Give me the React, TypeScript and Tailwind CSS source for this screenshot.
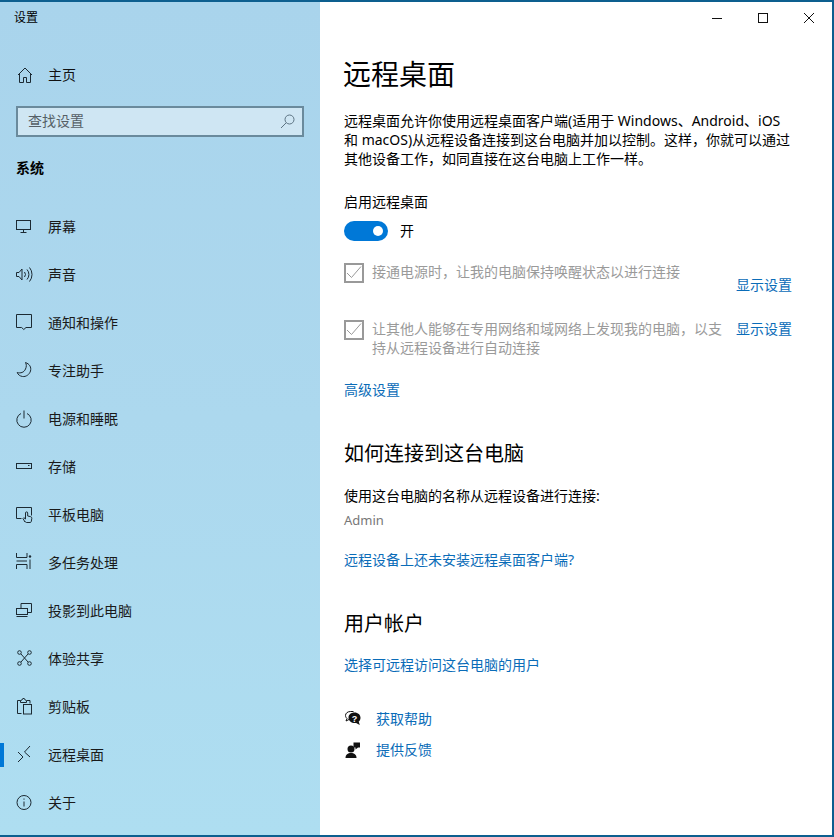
const font = "font-['Noto_Sans','Noto_Sans_CJK_SC',sans-serif]";

function Icon({ children }: { children: React.ReactNode }) {
  return (
    <svg width="20" height="20" viewBox="0 0 20 20" fill="none" stroke="#1c2a33" strokeWidth="1" className="shrink-0">
      {children}
    </svg>
  );
}

const navItems = [
  {
    label: "屏幕",
    icon: (
      <>
        <rect x="0.500" y="3.500" width="14" height="9" />
        <path d="M7.500 13v2M4.500 15.500h6" />
      </>
    ),
  },
  {
    label: "声音",
    icon: (
      <>
        <path d="M0.500 7.500h2.500l3-3.500v11l-3-3.500h-2.500z" />
        <path d="M8.500 7a4 4 0 0 1 0 5M11 4.500a7.500 7.500 0 0 1 0 10M13.500 2.500a11 11 0 0 1 0 14" />
      </>
    ),
  },
  {
    label: "通知和操作",
    icon: <path d="M0.500 1.500h15v13h-5.500l-2.200 2-2.200-2h-5.100z" />,
  },
  {
    label: "专注助手",
    icon: <path d="M9.500 1.500c4 1.500 6 4.500 5 8.500-1 3.500-4.500 6-8 5.500-2.500-.4-4.500-1.800-5.300-4 3.500 1 6.800 0 8.300-3.500 1.100-2.300 1.100-4.500 0-6.500z" />,
  },
  {
    label: "电源和睡眠",
    icon: (
      <>
        <path d="M5 4.500a7.200 7.200 0 1 0 6 0" />
        <path d="M8 1.500v8" />
      </>
    ),
  },
  {
    label: "存储",
    icon: (
      <>
        <rect x="0.500" y="6.500" width="15" height="5" />
        <path d="M12 8.500h1.500" />
      </>
    ),
  },
  {
    label: "平板电脑",
    icon: (
      <>
        <path d="M5.500 13.500h-5v-11h15v8" />
        <path d="M9 17l-2-3.500.8-.8 1.700 1.300v-6a1.100 1.100 0 0 1 2.200 0v3l3 .7c.8.200 1.200.8 1.100 1.600l-.5 3.200c-.2.700-.6 1-1.300 1h-3.500c-.6 0-1.100-.3-1.500-1z" />
      </>
    ),
  },
  {
    label: "多任务处理",
    icon: (
      <>
        <path d="M0.500 0v4.500h10.500v-4.500M0.500 16v-4.500h10.500v4.500M0.500 8h10.500M14 6.500v9.500" />
        <circle cx="14" cy="3.500" r="1.200" fill="#1c2a33" stroke="none" />
      </>
    ),
  },
  {
    label: "投影到此电脑",
    icon: (
      <>
        <path d="M5 7v-4.500h10.500v9h-4" />
        <rect x="0.500" y="7.500" width="11" height="6" />
        <path d="M0.500 15.500h11" />
      </>
    ),
  },
  {
    label: "体验共享",
    icon: (
      <>
        <circle cx="3.500" cy="3.500" r="1.800" />
        <circle cx="13.500" cy="3.500" r="1.800" />
        <circle cx="3.500" cy="14.500" r="1.800" />
        <circle cx="13.500" cy="14.500" r="1.800" />
        <path d="M5 5l7 8M12 5l-7 8" />
      </>
    ),
  },
  {
    label: "剪贴板",
    icon: (
      <>
        <path d="M5.500 16.500h-4v-13h3M11 3.500h3v3" />
        <path d="M4.500 5.500v-2l1.500-.5.800-1.500h1.500l.8 1.500 1.400.5v2z" />
        <rect x="7.500" y="7.500" width="8" height="9.500" />
      </>
    ),
  },
  {
    label: "远程桌面",
    active: true,
    icon: <path d="M2 7l5 5-5 5M14 1l-5.500 6 5.500 5" />,
  },
  {
    label: "关于",
    icon: (
      <>
        <circle cx="8" cy="9.500" r="7" />
        <path d="M8 8.500v5M8 5.500v1.200" />
      </>
    ),
  },
];

function CheckRow({ children }: { children: React.ReactNode }) {
  return (
    <div className="flex gap-2 w-[378px] text-sm leading-[19px] text-[#9a9a9a]">
      <span className="w-5 h-5 mt-[1px] border-2 border-[#999999] shrink-0 flex items-center justify-center">
        <svg width="16" height="16" viewBox="0 0 16 16" fill="none" stroke="#999999" strokeWidth="1">
          <path d="M1 8l4.500 4.500 9.500-11" />
        </svg>
      </span>
      <p className="w-[350px]">{children}</p>
    </div>
  );
}

export default function App() {
  return (
    <div className={`${font} w-[834px] h-[837px] flex border-t-2 border-b-2 border-r-2 border-[#0d5f8f] bg-white overflow-hidden text-black`}>
      <aside className="w-[320px] shrink-0 bg-gradient-to-b from-[#a9d4ec] via-[#acd8ee] to-[#aedef1]">
        <div className="h-[32px] pl-[14px] pt-[7px] text-xs leading-[18px]">设置</div>
        <div className="h-[48px] mt-[17px] flex items-center pl-[17px] text-sm text-[#111]">
          <svg width="16" height="16" viewBox="0 0 16 16" fill="none" stroke="#1c2a33" strokeWidth="1" className="shrink-0">
            <path d="M1 8l7-7 7 7M2.500 7v8.500h4v-5h3v5h4v-8.500" />
          </svg>
          <span className="ml-[15px]">主页</span>
        </div>
        <div className="mx-4 mt-[7px] h-[31px] border-2 border-[#6a8a9c] bg-[#cfe6f3] flex items-center justify-between pl-[10px] pr-[7px]">
          <span className="text-sm pb-[2px] text-[#555f66]">查找设置</span>
          <svg width="15" height="15" viewBox="0 0 15 15" fill="none" stroke="#5d7483" strokeWidth="1">
            <circle cx="9.500" cy="5.500" r="4.500" />
            <path d="M6.200 8.800l-5.200 5.200" />
          </svg>
        </div>
        <div className="mt-[20px] pl-4 h-[22px] text-sm leading-[22px] font-bold">系统</div>
        <nav className="mt-[24px]">
          {navItems.map((item) => (
            <div key={item.label} className="relative h-[48px] flex items-center pl-4 text-sm text-[#1a1a1a]">
              {item.active && <span className="absolute left-0 top-3 w-1 h-6 bg-[#0078d7]" />}
              <Icon>{item.icon}</Icon>
              <span className="ml-3">{item.label}</span>
            </div>
          ))}
        </nav>
      </aside>

      <main className="flex-1 min-w-0">
        <div className="h-[32px] flex justify-end">
          {[
            <path key="min" d="M0 5.500h10" />,
            <rect key="max" x="0.500" y="0.500" width="9" height="9" />,
            <path key="close" d="M0 0l10 10M10 0l-10 10" />,
          ].map((glyph, i) => (
            <div key={i} className="w-[46px] flex items-center justify-center">
              <svg width="10" height="10" viewBox="0 0 10 10" fill="none" stroke="#111" strokeWidth="1">
                {glyph}
              </svg>
            </div>
          ))}
        </div>

        <div className="pl-6 pr-[40px]">
          <h1 className="text-[28px] leading-[40px] mt-[20px] ml-[-1px]">远程桌面</h1>
          <p className="mt-[17px] text-sm leading-[19px] whitespace-nowrap">
            远程桌面允许你使用远程桌面客户端(适用于 Windows、Android、iOS
            <br />
            和 macOS)从远程设备连接到这台电脑并加以控制。这样，你就可以通过
            <br />
            其他设备工作，如同直接在这台电脑上工作一样。
          </p>
          <div className="mt-[24px] text-sm leading-[19px]">启用远程桌面</div>
          <div className="mt-[10px] flex items-center gap-3 text-sm">
            <span className="w-11 h-5 rounded-full bg-[#0078d7] flex items-center justify-end pr-[5px]">
              <span className="w-[10px] h-[10px] rounded-full bg-white" />
            </span>
            <span>开</span>
          </div>

          <div className="mt-[21px] flex justify-between">
            <CheckRow>接通电源时，让我的电脑保持唤醒状态以进行连接</CheckRow>
            <span className="text-sm leading-[19px] text-[#0a6cb8] mt-[13px]">显示设置</span>
          </div>
          <div className="mt-[25px] flex justify-between">
            <CheckRow>让其他人能够在专用网络和域网络上发现我的电脑，以支持从远程设备进行自动连接</CheckRow>
            <span className="text-sm leading-[19px] text-[#0a6cb8]">显示设置</span>
          </div>
          <div className="mt-[23px] text-sm leading-[19px] text-[#0a6cb8]">高级设置</div>

          <h2 className="mt-[41px] text-xl leading-[28px]">如何连接到这台电脑</h2>
          <p className="mt-[18px] text-sm leading-[19px]">使用这台电脑的名称从远程设备进行连接:</p>
          <p className="mt-[6px] text-[13px] leading-[19px] text-[#777]">Admin</p>
          <p className="mt-[20px] text-sm leading-[19px] text-[#0a6cb8]">远程设备上还未安装远程桌面客户端?</p>

          <h2 className="mt-[41px] text-xl leading-[28px]">用户帐户</h2>
          <p className="mt-[17px] text-sm leading-[19px] text-[#0a6cb8]">选择可远程访问这台电脑的用户</p>

          <div className="mt-[35px] flex items-center gap-[14px] text-sm leading-[19px] text-[#0a6cb8]">
            <svg width="18" height="18" viewBox="0 0 18 18" className="shrink-0">
              <path d="M9.500 1.500h-3c-3 0-5 1.800-5 4 0 1.200.6 2.200 1.500 3l-1 2.500 3-1.500" fill="none" stroke="#111" strokeWidth="1" />
              <path d="M10.500 2.500c3.600 0 6 2.300 6 5.200 0 1.600-.7 3-1.800 3.900l1.100 3.400-3.700-2.100c-4.100.6-7.600-1.900-7.600-5.200 0-3 2.400-5.200 6-5.200z" fill="#111" />
              <text x="10.500" y="11.500" fontSize="9" fontWeight="700" fill="#fff" textAnchor="middle" fontFamily="Liberation Sans">?</text>
            </svg>
            <span>获取帮助</span>
          </div>
          <div className="mt-[12px] flex items-center gap-[14px] text-sm leading-[19px] text-[#0a6cb8]">
            <svg width="18" height="18" viewBox="0 0 18 18" fill="#111" className="shrink-0">
              <circle cx="7" cy="8" r="3.500" />
              <path d="M1.500 17c0-3.500 2.300-5 5.500-5s5.500 1.500 5.500 5z" />
              <path d="M9.500 1.500h6.500v5h-2l-2.500 2v-2h-2z" />
            </svg>
            <span>提供反馈</span>
          </div>
        </div>
      </main>
    </div>
  );
}
